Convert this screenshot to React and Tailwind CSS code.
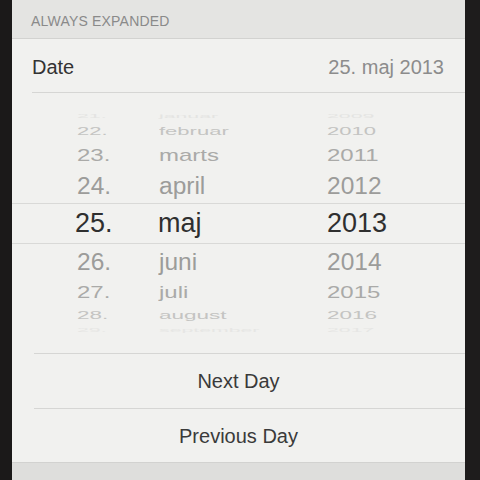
const rows = [
  { d: "21.", m: "januar", y: "2009", h: "h-[12px]", s: "scale-x-[0.85] scale-y-[0.2]", c: "text-[#e4e4e2]" },
  { d: "22.", m: "februar", y: "2010", h: "h-[19px]", s: "scale-x-[0.88] scale-y-[0.45]", c: "text-[#c4c4c2]" },
  { d: "23.", m: "marts", y: "2011", h: "h-[29px]", s: "scale-x-[0.96] scale-y-[0.67]", c: "text-[#aaaaa8]" },
  { d: "24.", m: "april", y: "2012", h: "h-[33px]", s: "scale-x-[0.98] scale-y-[0.93]", c: "text-[#9c9c9a]" },
  { d: "25.", m: "maj", y: "2013", sel: true },
  { d: "26.", m: "juni", y: "2014", h: "h-[35px]", s: "scale-x-[0.98] scale-y-[0.95]", c: "text-[#9c9c9a]" },
  { d: "27.", m: "juli", y: "2015", h: "h-[27px]", s: "scale-x-[0.96] scale-y-[0.67]", c: "text-[#aaaaa8]" },
  { d: "28.", m: "august", y: "2016", h: "h-[18px]", s: "scale-x-[0.9] scale-y-[0.45]", c: "text-[#c4c4c2]" },
  { d: "29.", m: "september", y: "2017", h: "h-[12px]", s: "scale-x-[0.85] scale-y-[0.18]", c: "text-[#e6e6e4]" },
];

function PickerRow({ row }) {
  if (row.sel) {
    return (
      <div className="flex h-[41px] items-center border-y border-[#d9d9d7] pl-[63px] text-[27px] leading-none text-[#2f2f2f]">
        <span className="w-[83px]">{row.d}</span>
        <span className="w-[169px]">{row.m}</span>
        <span>{row.y}</span>
      </div>
    );
  }
  return (
    <div className={`flex items-center overflow-visible pl-[65px] text-[25px] leading-none ${row.h} ${row.c}`}>
      <span className="w-[82px]">
        <span className={`inline-block origin-left ${row.s}`}>{row.d}</span>
      </span>
      <span className="w-[168px]">
        <span className={`inline-block origin-left ${row.s}`}>{row.m}</span>
      </span>
      <span>
        <span className={`inline-block origin-left ${row.s}`}>{row.y}</span>
      </span>
    </div>
  );
}

export default function App() {
  return (
    <div
      className="flex h-[480px] w-[480px] overflow-hidden bg-[#1b1919]"
      style={{ fontFamily: '"Liberation Sans", Arial, sans-serif' }}
    >
      <div className="w-[12px] shrink-0 bg-[#1b1919]" />

      <div className="flex flex-1 flex-col">
        {/* section header */}
        <div className="flex h-[39px] shrink-0 items-end border-b border-[#d2d2d0] bg-[#e4e4e2] pb-[10px] pl-[19px]">
          <span className="text-[14px] leading-none tracking-[0.2px] text-[#8a8a8a]">ALWAYS EXPANDED</span>
        </div>

        <div className="flex flex-col bg-[#f1f1ef]">
          {/* Date row */}
          <div className="flex h-[53px] items-center justify-between pl-[20px] pr-[21px] pt-[2px]">
            <span className="text-[20px] text-[#333]">Date</span>
            <span className="text-[20px] text-[#8c8c8c]">25. maj 2013</span>
          </div>
          <div className="ml-[20px] h-px bg-[#d6d6d4]" />

          {/* wheel */}
          <div className="flex h-[260px] flex-col overflow-hidden pt-[17px]">
            {rows.map((r) => (
              <PickerRow key={r.d} row={r} />
            ))}
          </div>
          <div className="ml-[22px] h-px bg-[#d6d6d4]" />

          <div className="flex h-[54px] items-center justify-center text-[20px] text-[#3a3a3a]">Next Day</div>
          <div className="ml-[22px] h-px bg-[#d6d6d4]" />
          <div className="flex h-[53px] items-center justify-center text-[20px] text-[#3a3a3a]">Previous Day</div>
        </div>

        <div className="flex-1 border-t border-[#d2d2d0] bg-[#dededc]" />
      </div>

      <div className="w-[15px] shrink-0 bg-[#1e1c1c]" />
    </div>
  );
}
